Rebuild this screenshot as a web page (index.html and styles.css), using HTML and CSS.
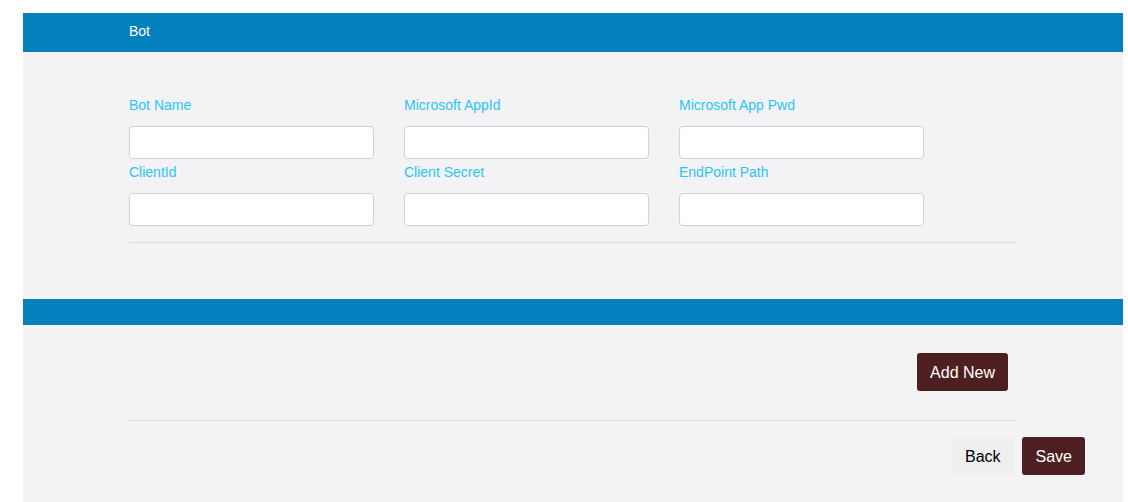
FILE: index.html
```html
<!DOCTYPE html>
<html>
<head>
<meta charset="utf-8">
<title>Bot</title>
<link rel="stylesheet" href="styles.css">
</head>
<body>
<div class="panel">
  <div class="panel-header">Bot</div>
  <div class="section form-section">
    <div class="fields">
      <div class="field"><label>Bot Name</label><input type="text"></div>
      <div class="field"><label>Microsoft AppId</label><input type="text"></div>
      <div class="field"><label>Microsoft App Pwd</label><input type="text"></div>
      <div class="field"><label>ClientId</label><input type="text"></div>
      <div class="field"><label>Client Secret</label><input type="text"></div>
      <div class="field"><label>EndPoint Path</label><input type="text"></div>
    </div>
    <hr class="divider">
  </div>
  <div class="sub-bar"></div>
  <div class="section list-section">
    <div class="actions-right">
      <button class="btn btn-dark">Add New</button>
    </div>
    <hr class="divider">
  </div>
  <div class="footer">
    <button class="btn btn-light">Back</button>
    <button class="btn btn-dark">Save</button>
  </div>
</div>
</body>
</html>
```

FILE: styles.css
```css
html, body {
  margin: 0;
  padding: 0;
  background: #ffffff;
  font-family: "Liberation Sans", Arial, sans-serif;
}

.panel {
  margin: 13px 0 0 23px;
  width: 1100px;
  background: #f3f3f5;
}

.panel-header {
  height: 39px;
  box-sizing: border-box;
  padding: 8px 0 0 106px;
  background: #0480bd;
  color: #ffffff;
  font-size: 14px;
  line-height: 20px;
}

.section {
  padding: 0 107px 0 106px;
}

.form-section {
  padding-top: 43px;
  padding-bottom: 56px;
}

.fields {
  display: grid;
  grid-template-columns: repeat(3, 245px);
  column-gap: 30px;
  row-gap: 3px;
}

.field {
  display: flex;
  flex-direction: column;
}

.field label {
  font-size: 14px;
  line-height: 20px;
  color: #2ac5f5;
  margin-bottom: 11px;
}

.field input {
  box-sizing: border-box;
  width: 245px;
  height: 33px;
  border: 1px solid #cfd2d8;
  border-radius: 4px;
  background: #ffffff;
  padding: 0 8px;
  font-family: inherit;
  font-size: 14px;
  outline: none;
}

.divider {
  margin: 16px 0 0;
  border: 0;
  border-top: 1px solid #dcdcdf;
  height: 0;
}

.sub-bar {
  height: 26px;
  background: #0480bd;
}

.list-section {
  padding-top: 28px;
}

.list-section .divider {
  margin-top: 29px;
}

.actions-right {
  display: flex;
  justify-content: flex-end;
  padding-right: 8px;
}

.btn {
  height: 38px;
  box-sizing: border-box;
  border: 0;
  border-radius: 3px;
  font-family: "Liberation Sans", Arial, sans-serif;
  font-size: 16px;
  padding: 1px 13px 0;
  cursor: pointer;
}

.btn-dark {
  background: #4e1f20;
  color: #ffffff;
}

.btn-light {
  background: #efefef;
  color: #000000;
}

.footer .btn-dark {
  padding: 1px 13px 0 14px;
}

.footer .btn-light {
  padding: 1px 13px 0 14px;
}

.footer {
  display: flex;
  justify-content: flex-end;
  gap: 8px;
  padding: 16px 38px 27px 0;
}
```
